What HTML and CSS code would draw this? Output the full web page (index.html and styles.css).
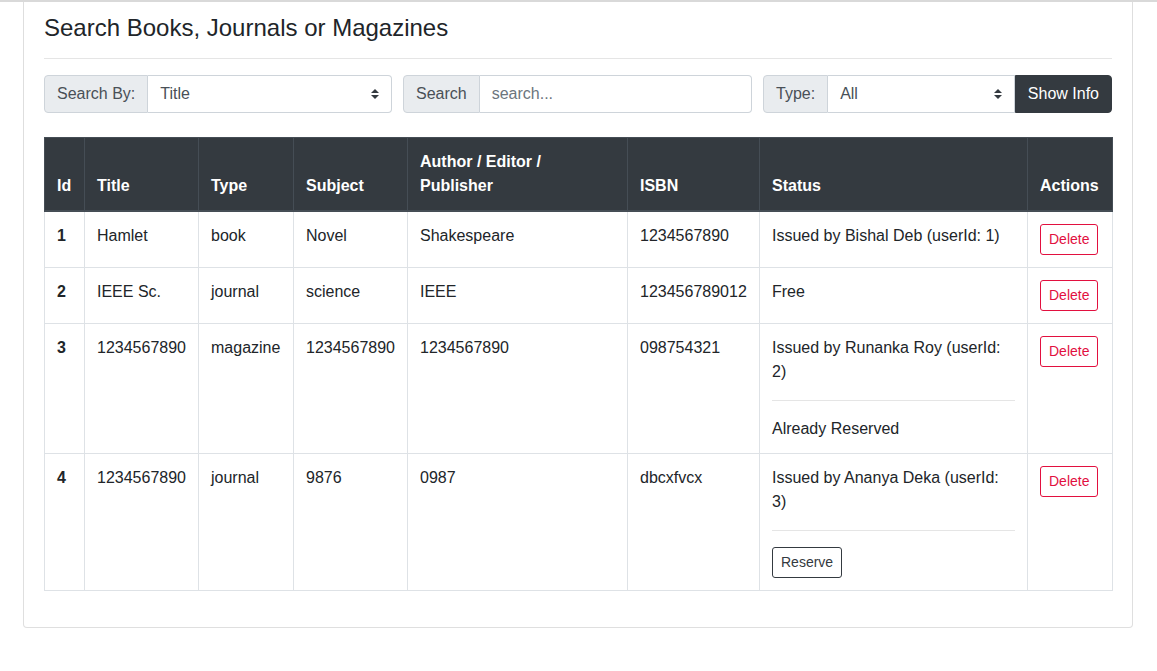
FILE: index.html
```html
<!DOCTYPE html>
<html lang="en">
<head>
<meta charset="utf-8">
<title>Search Books, Journals or Magazines</title>
<link rel="stylesheet" href="styles.css">
</head>
<body>
<div class="topline"></div>
<main class="page">
  <section class="card">
    <div class="card-body">
      <h4 class="title">Search Books, Journals or Magazines</h4>
      <hr class="divider">
      <div class="filters">
        <div class="input-group">
          <span class="addon">Search By:</span>
          <div class="select"><span>Title</span><svg class="arrows" viewBox="0 0 4 5" width="8" height="10"><path d="M2 0L0 2h4zm0 5L0 3h4z" fill="#343a40"/></svg></div>
        </div>
        <div class="input-group">
          <span class="addon">Search</span>
          <div class="field"><span class="placeholder">search...</span></div>
        </div>
        <div class="input-group">
          <span class="addon">Type:</span>
          <div class="select select-mid"><span>All</span><svg class="arrows" viewBox="0 0 4 5" width="8" height="10"><path d="M2 0L0 2h4zm0 5L0 3h4z" fill="#343a40"/></svg></div>
          <button class="btn-dark">Show Info</button>
        </div>
      </div>
      <table class="table">
        <colgroup>
          <col class="c-id"><col class="c-title"><col class="c-type"><col class="c-subject"><col class="c-author"><col class="c-isbn"><col class="c-status"><col class="c-actions">
        </colgroup>
        <thead>
          <tr>
            <th>Id</th><th>Title</th><th>Type</th><th>Subject</th><th>Author / Editor / Publisher</th><th>ISBN</th><th>Status</th><th>Actions</th>
          </tr>
        </thead>
        <tbody>
          <tr>
            <th class="rowhead">1</th><td>Hamlet</td><td>book</td><td>Novel</td><td>Shakespeare</td><td>1234567890</td>
            <td>Issued by Bishal Deb (userId: 1)</td>
            <td><button class="btn-del">Delete</button></td>
          </tr>
          <tr>
            <th class="rowhead">2</th><td>IEEE Sc.</td><td>journal</td><td>science</td><td>IEEE</td><td>123456789012</td>
            <td>Free</td>
            <td><button class="btn-del">Delete</button></td>
          </tr>
          <tr>
            <th class="rowhead">3</th><td>1234567890</td><td>magazine</td><td>1234567890</td><td>1234567890</td><td>098754321</td>
            <td>Issued by Runanka Roy (userId: 2)<hr class="cell-hr">Already Reserved</td>
            <td><button class="btn-del">Delete</button></td>
          </tr>
          <tr>
            <th class="rowhead">4</th><td>1234567890</td><td>journal</td><td>9876</td><td>0987</td><td>dbcxfvcx</td>
            <td>Issued by Ananya Deka (userId: 3)<hr class="cell-hr"><button class="btn-reserve">Reserve</button></td>
            <td><button class="btn-del">Delete</button></td>
          </tr>
        </tbody>
      </table>
    </div>
  </section>
</main>
</body>
</html>
```
FILE: styles.css
```css
* { box-sizing: border-box; }
html, body { margin: 0; padding: 0; background: #fff; }
body {
  font-family: "Liberation Sans", Arial, Helvetica, sans-serif;
  font-size: 16px;
  line-height: 1.5;
  color: #212529;
}
.topline { height: 2px; background: #d9d9d9; }
.page { padding: 0 24px 0 23px; }
.card {
  border: 1px solid rgba(0,0,0,.125);
  border-top: 0;
  border-radius: 0 0 4px 4px;
  background: #fff;
}
.card-body { padding: 12px 20px 20px; }
.title {
  margin: 0;
  font-size: 24px;
  font-weight: 500;
  line-height: 1.2;
}
.divider {
  margin: 15px 0 16px;
  border: 0;
  border-top: 1px solid rgba(0,0,0,.1);
}
.filters {
  display: grid;
  grid-template-columns: 348px 349px 349px;
  gap: 11px;
}
.input-group {
  display: flex;
  height: 38px;
}
.addon {
  display: flex;
  align-items: center;
  padding: 6px 12px;
  background: #e9ecef;
  border: 1px solid #ced4da;
  border-radius: 4px 0 0 4px;
  color: #495057;
  white-space: nowrap;
}
.select, .field {
  flex: 1;
  display: flex;
  align-items: center;
  padding: 6px 12px;
  border: 1px solid #ced4da;
  border-left: 0;
  border-radius: 0 4px 4px 0;
  color: #495057;
  background: #fff;
}
.select-mid { border-radius: 0; }
.arrows { margin-left: auto; }
.placeholder { color: #6c757d; }
.btn-dark {
  font: inherit;
  background: #343a40;
  color: #fff;
  border: 1px solid #343a40;
  border-radius: 0 4px 4px 0;
  padding: 6px 12px;
}
.table {
  margin-top: 24px;
  margin-bottom: 16px;
  width: 100%;
  border-collapse: collapse;
  table-layout: fixed;
  border: 1px solid #dee2e6;
}
.c-id { width: 40px; }
.c-title { width: 114px; }
.c-type { width: 95px; }
.c-subject { width: 114px; }
.c-author { width: 220px; }
.c-isbn { width: 132px; }
.c-status { width: 268px; }
.c-actions { width: 85px; }
.table th, .table td {
  padding: 12px;
  border: 1px solid #dee2e6;
  vertical-align: top;
  text-align: left;
}
.table thead th {
  background: #343a40;
  color: #fff;
  border-color: #454d55;
  border-bottom: 2px solid #454d55;
  vertical-align: bottom;
  font-weight: 700;
}
.rowhead { font-weight: 700; }
.cell-hr {
  margin: 16px 0;
  border: 0;
  border-top: 1px solid rgba(0,0,0,.1);
}
.btn-del, .btn-reserve {
  font: inherit;
  font-size: 14px;
  line-height: 1.5;
  padding: 4px 8px;
  border-radius: 3px;
  background: #fff;
}
.btn-del { color: #e2103f; border: 1px solid #e2103f; }
.btn-reserve { color: #343a40; border: 1px solid #343a40; }
```
